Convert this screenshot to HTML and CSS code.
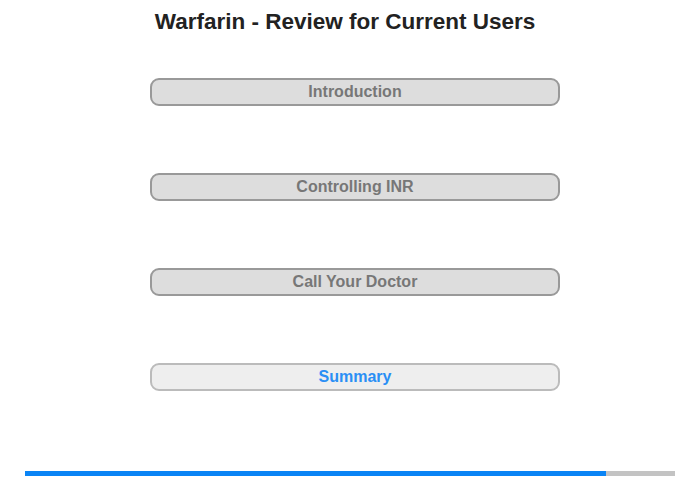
FILE: index.html
```html
<!DOCTYPE html>
<html>
<head>
<meta charset="utf-8">
<link rel="stylesheet" href="styles.css">
</head>
<body>
<div class="page">
  <h1 class="title">Warfarin - Review for Current Users</h1>
  <div class="menu">
    <div class="btn">Introduction</div>
    <div class="btn">Controlling INR</div>
    <div class="btn">Call Your Doctor</div>
    <div class="btn current">Summary</div>
  </div>
  <div class="progress"><div class="fill" style="width:581px"></div></div>
</div>
</body>
</html>
```
FILE: styles.css
```css
html, body {
  margin: 0;
  padding: 0;
  background: #fff;
}
.page {
  width: 700px;
  height: 480px;
  position: relative;
  font-family: "Liberation Sans", Arial, sans-serif;
}
.title {
  margin: 0;
  padding-top: 9px;
  padding-right: 10px;
  font-size: 22.5px;
  line-height: 26px;
  font-weight: bold;
  color: #222;
  text-align: center;
}
.menu {
  display: flex;
  flex-direction: column;
  gap: 67px;
  margin-top: 43px;
  margin-left: 150px;
  width: 410px;
}
.btn {
  box-sizing: border-box;
  height: 28px;
  border: 2px solid #999;
  border-radius: 9px;
  background: #ddd;
  color: #777;
  font-size: 16px;
  font-weight: bold;
  line-height: 24px;
  text-align: center;
}
.btn.current {
  background: #eee;
  border-color: #bbb;
  color: #2a8ff5;
}
.progress {
  position: absolute;
  left: 25px;
  top: 471px;
  width: 650px;
  height: 5px;
  background: #c3c3c3;
}
.fill {
  height: 100%;
  background: #0a84f5;
}
```
